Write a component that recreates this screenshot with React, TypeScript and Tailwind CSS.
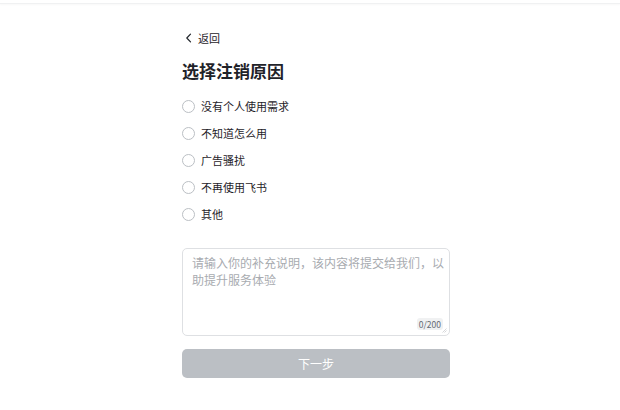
import { useState } from "react";

const reasons = ["没有个人使用需求", "不知道怎么用", "广告骚扰", "不再使用飞书", "其他"];

const font = "font-['Noto_Sans_CJK_SC','Noto_Sans',sans-serif]";

export default function App() {
  const [picked, setPicked] = useState<number | null>(null);
  const [note, setNote] = useState("");

  return (
    <div className={`min-h-[410px] bg-white text-[#1f2329] ${font}`}>
      {/* top bar edge */}
      <div className="h-[4px] border-b border-[#f0f1f2] shadow-[0_1px_2px_rgba(0,0,0,0.03)]" />

      <div className="ml-[182px] w-[268px] pt-[26px]">
        {/* back */}
        <button className="flex h-[16px] items-center gap-[5px] pl-[3px] text-[11px] text-[#1f2329]">
          <svg width="8" height="10" viewBox="0 0 8 10" fill="none">
            <path d="M5.5 1.2 1.8 5l3.7 3.8" stroke="#1f2329" strokeWidth="1.2" strokeLinecap="round" strokeLinejoin="round" />
          </svg>
          <span>返回</span>
        </button>

        {/* title */}
        <h1 className="mt-[13px] h-[24px] text-[17px] font-bold leading-[24px]">选择注销原因</h1>

        {/* reasons */}
        <div className="mt-[10px] flex flex-col">
          {reasons.map((r, i) => (
            <label key={r} onClick={() => setPicked(i)} className="flex h-[27px] cursor-pointer items-center gap-[6px] text-[11px]">
              <span
                className={`h-[13px] w-[13px] rounded-full border ${
                  picked === i ? "border-[4px] border-[#3370ff]" : "border-[#bbbfc4]"
                }`}
              />
              <span>{r}</span>
            </label>
          ))}
        </div>

        {/* textarea */}
        <div className="relative mt-[20px] h-[88px] rounded-[5px] border border-[#dee0e3]">
          <textarea
            value={note}
            onChange={e => setNote(e.target.value.slice(0, 200))}
            placeholder="请输入你的补充说明，该内容将提交给我们，以助提升服务体验"
            className="h-full w-full resize-none bg-transparent py-[5px] pl-[9px] pr-[3px] text-[12px] leading-[17px] outline-none placeholder:text-[#a8abb0]"
          />
          <span className="absolute bottom-[5px] right-[6px] rounded-[3px] bg-[#f0f1f2] px-[2px] text-[8.5px] leading-[12px] text-[#646a73]">
            {note.length}/200
          </span>
          <svg className="absolute bottom-[2px] right-[2px]" width="5" height="5" viewBox="0 0 5 5">
            <path d="M4.5 0.5 0.5 4.5M4.5 2.5 2.5 4.5" stroke="#c4c6ca" strokeWidth="0.7" />
          </svg>
        </div>

        {/* next */}
        <button className="mt-[13px] h-[29px] w-full rounded-[5px] bg-[#bbbfc4] text-[12px] text-white">下一步</button>
      </div>
    </div>
  );
}
